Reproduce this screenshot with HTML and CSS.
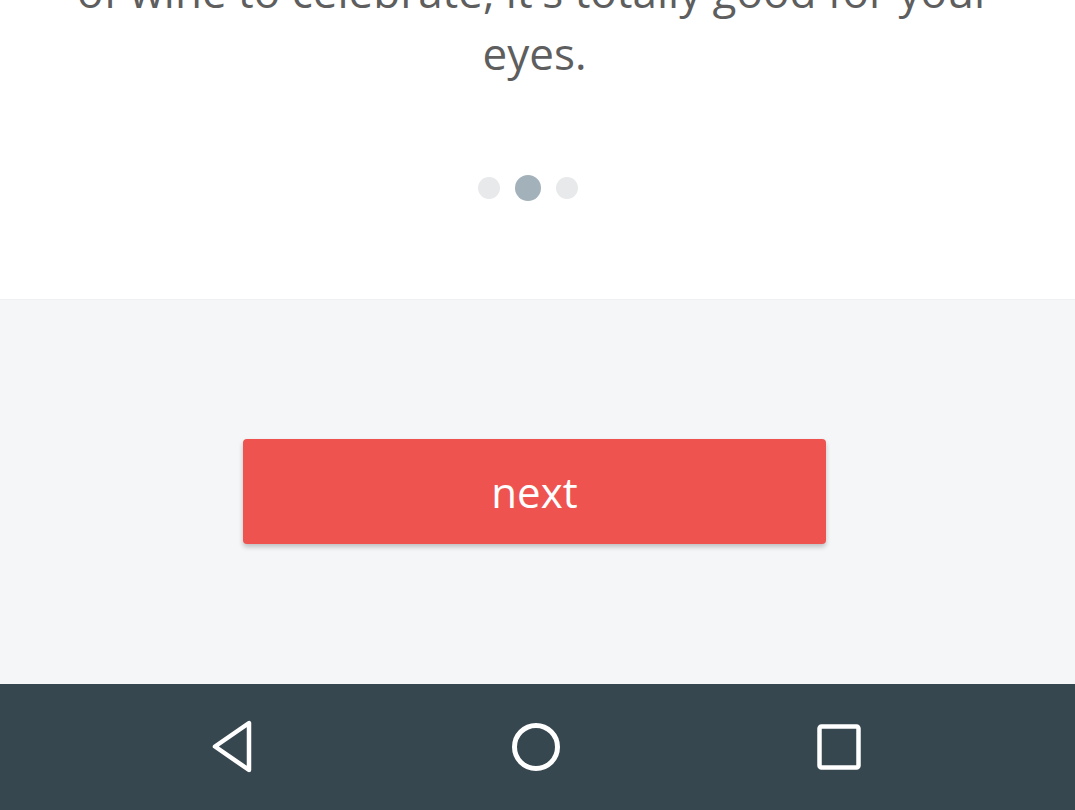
FILE: index.html
```html
<!DOCTYPE html>
<html>
<head>
<meta charset="utf-8">
<link rel="stylesheet" href="styles.css">
</head>
<body>
<div class="screen">
  <section class="intro">
    <p class="caption">of wine to celebrate, it's totally good for your eyes.</p>
    <div class="dots">
      <span class="dot"></span>
      <span class="dot active"></span>
      <span class="dot"></span>
    </div>
  </section>
  <section class="actions">
    <button class="next-btn">next</button>
  </section>
  <nav class="navbar">
    <svg class="nav-icon" width="48" height="56" viewBox="0 0 48 56">
      <path d="M40 4 L40 51 L6 27.5 Z" fill="none" stroke="#fff" stroke-width="4.5" stroke-linejoin="round"/>
    </svg>
    <svg class="nav-icon" width="48" height="56" viewBox="0 0 48 56">
      <circle cx="24" cy="28" r="21.5" fill="none" stroke="#fff" stroke-width="5"/>
    </svg>
    <svg class="nav-icon" width="48" height="56" viewBox="0 0 48 56">
      <rect x="4.5" y="7.5" width="39" height="41" rx="2" fill="none" stroke="#fff" stroke-width="4.5"/>
    </svg>
  </nav>
</div>
</body>
</html>
```
FILE: styles.css
```css
html, body {
  margin: 0;
  padding: 0;
  background: #ffffff;
}
.screen {
  width: 1075px;
  height: 810px;
  overflow: hidden;
  display: flex;
  flex-direction: column;
  font-family: "Open Sans", "Liberation Sans", sans-serif;
}
.intro {
  height: 300px;
  background: #ffffff;
  display: flex;
  flex-direction: column;
  align-items: center;
  padding-right: 6px;
  border-bottom: 1px solid #eef0f1;
  box-sizing: border-box;
}
.caption {
  margin: -40px 0 0 0;
  width: 960px;
  text-align: center;
  font-size: 44px;
  line-height: 62px;
  color: #5e5e5e;
}
.dots {
  margin-top: 91px;
  margin-right: 14px;
  display: flex;
  align-items: center;
  gap: 15px;
}
.dot {
  width: 22px;
  height: 22px;
  border-radius: 50%;
  background: #e8e9ea;
}
.dot.active {
  width: 26px;
  height: 26px;
  background: #a2b1ba;
}
.actions {
  height: 384px;
  background: #f4f6f7;
  display: flex;
  justify-content: center;
  padding-top: 139px;
  padding-right: 6px;
  box-sizing: border-box;
}
.next-btn {
  width: 583px;
  height: 105px;
  border: none;
  border-radius: 4px;
  background: #ef5350;
  color: #ffffff;
  font-family: "Open Sans", "Liberation Sans", sans-serif;
  font-size: 42px;
  padding: 0;
  box-shadow: 0 3px 5px rgba(0, 0, 0, 0.22);
}
.navbar {
  height: 126px;
  background: #37474f;
  display: flex;
  justify-content: center;
  align-items: center;
  gap: 255px;
  padding-right: 4px;
}
.nav-icon {
  display: block;
}
```
